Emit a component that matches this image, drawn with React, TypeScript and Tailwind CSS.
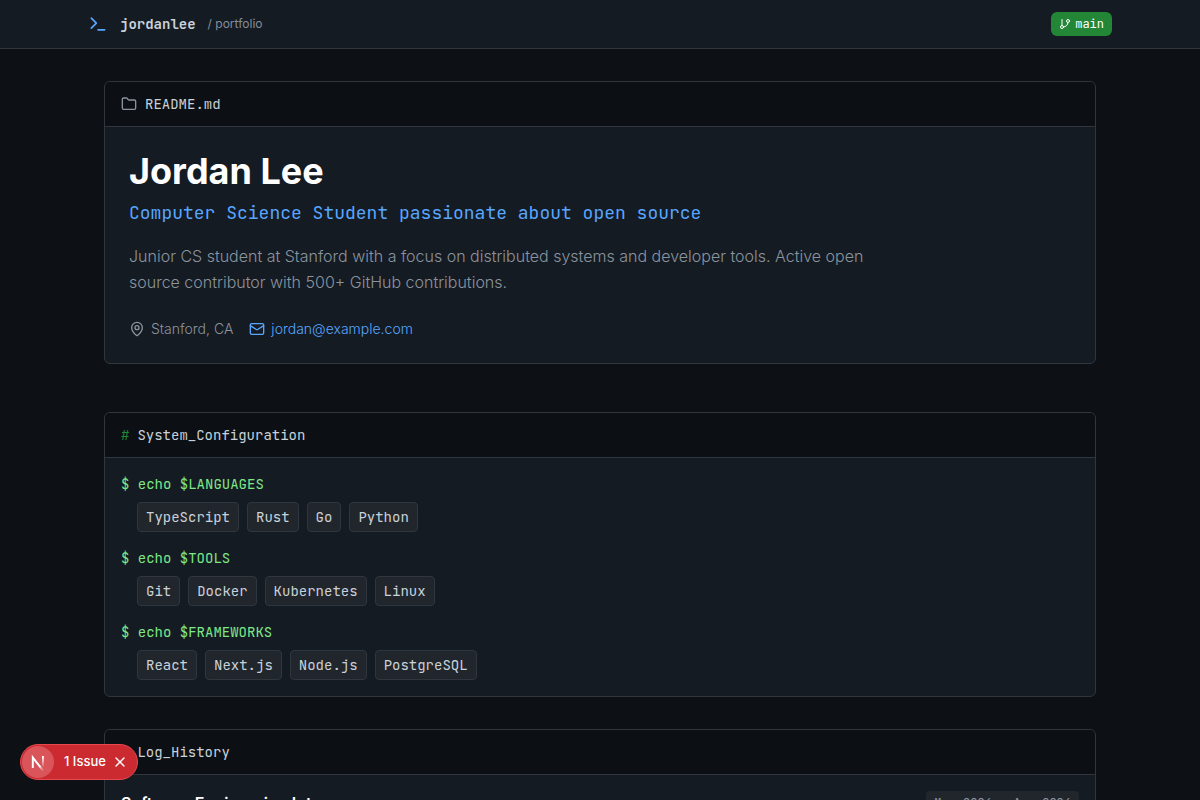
import { useState } from "react";
import type { ReactNode } from "react";
import { Folder, GitBranch, Mail, MapPin, Terminal, X } from "lucide-react";

const MONO = "font-['JetBrains_Mono','DejaVu_Sans_Mono',monospace]";

const configuration = [
  { name: "LANGUAGES", items: ["TypeScript", "Rust", "Go", "Python"] },
  { name: "TOOLS", items: ["Git", "Docker", "Kubernetes", "Linux"] },
  { name: "FRAMEWORKS", items: ["React", "Next.js", "Node.js", "PostgreSQL"] },
];

const history = [
  { title: "Software Engineering Intern", period: "May 2024 - Aug 2024" },
];

function Panel({ heading, className = "", children }: { heading: ReactNode; className?: string; children: ReactNode }) {
  return (
    <section className={`rounded-md border border-[#30363d] bg-[#151b23] overflow-hidden ${className}`}>
      <div className={`flex items-center gap-2 border-b border-[#30363d] bg-[#0c1014] px-4 py-3 text-sm ${MONO}`}>
        {heading}
      </div>
      {children}
    </section>
  );
}

function IssueToast() {
  const [open, setOpen] = useState(true);
  if (!open) return null;

  return (
    <div className="fixed bottom-5 left-5 flex h-9 items-center rounded-full border border-[#e5484d] bg-[#ca2a30] pl-px pr-[9px] text-[13px] font-medium text-white">
      <span className="flex size-8 items-center justify-center rounded-full bg-[#d9555a]">
        <svg viewBox="0 0 40 40" fill="none" className="size-8" aria-hidden="true">
          <defs>
            <linearGradient id="diagonal" x1="21" y1="22" x2="28" y2="31" gradientUnits="userSpaceOnUse">
              <stop stopColor="white" />
              <stop offset="1" stopColor="white" stopOpacity="0" />
            </linearGradient>
            <linearGradient id="stem" x1="26" y1="13" x2="26" y2="27" gradientUnits="userSpaceOnUse">
              <stop stopColor="white" />
              <stop offset="1" stopColor="white" stopOpacity="0" />
            </linearGradient>
          </defs>
          <path d="M13.5 27.5V14.5L23 26.5" stroke="white" strokeWidth="2.4" />
          <path d="M22.2 25.5L26.5 31" stroke="url(#diagonal)" strokeWidth="2.4" />
          <path d="M26.2 12.6V27.5" stroke="url(#stem)" strokeWidth="2.4" />
        </svg>
      </span>
      <span className="ml-2.5">1 Issue</span>
      <button type="button" aria-label="Dismiss" onClick={() => setOpen(false)} className="ml-1.5">
        <X className="size-4" />
      </button>
    </div>
  );
}

export default function App() {
  return (
    <div className="min-h-screen bg-[#0d1116] text-[#c9d1d9] antialiased font-['Inter',sans-serif]">
      <header className="border-b border-[#30363d] bg-[#151b23] px-4 py-3">
        <div className="mx-auto flex max-w-5xl items-center justify-between">
          <div className="flex items-center gap-3">
            <Terminal className="size-5 text-[#58a6ff]" />
            <span className={`text-sm font-semibold ${MONO}`}>jordanlee</span>
            <span className="text-xs text-[#848d97]">/ portfolio</span>
          </div>
          <button
            type="button"
            className={`flex h-6 items-center gap-1 rounded-md bg-[#238636] px-2 text-xs text-white ${MONO}`}
          >
            <GitBranch className="size-3" />
            main
          </button>
        </div>
      </header>

      <main className="mx-auto max-w-5xl px-4 py-8">
        <Panel
          className="mb-12"
          heading={
            <>
              <Folder className="size-4 text-[#8b949e]" />
              <span>README.md</span>
            </>
          }
        >
          <div className="p-6">
            <h1 className="mb-2 text-4xl font-bold text-white">Jordan Lee</h1>
            <p className={`mb-4 text-lg text-[#58a6ff] ${MONO}`}>
              Computer Science Student passionate about open source
            </p>
            <p className="mb-6 max-w-3xl font-light leading-[26px] text-[#8b949e]">
              Junior CS student at Stanford with a focus on distributed systems and developer tools. Active open
              source contributor with 500+ GitHub contributions.
            </p>
            <div className="flex flex-wrap gap-4 text-sm font-light">
              <span className="flex items-center gap-1.5 text-[#8b949e]">
                <MapPin className="size-4" />
                Stanford, CA
              </span>
              <a href="mailto:jordan@example.com" className="flex items-center gap-1.5 text-[#58a6ff] hover:underline">
                <Mail className="size-4" />
                jordan@example.com
              </a>
            </div>
          </div>
        </Panel>

        <Panel
          className="mb-8"
          heading={
            <>
              <span className="text-[#238636]">#</span>
              <h2>System_Configuration</h2>
            </>
          }
        >
          <div className={`space-y-4 p-4 text-sm ${MONO}`}>
            {configuration.map((group) => (
              <div key={group.name}>
                <div className="mb-2 text-[#7ee787]">$ echo ${group.name}</div>
                <ul className="flex flex-wrap gap-2 pl-4">
                  {group.items.map((item) => (
                    <li key={item} className="rounded border border-[#30363d] bg-[#21262d] px-2 py-1">
                      {item}
                    </li>
                  ))}
                </ul>
              </div>
            ))}
          </div>
        </Panel>

        <Panel
          heading={
            <>
              <span className="text-[#238636]">#</span>
              <h2>Log_History</h2>
            </>
          }
        >
          <div className="p-4">
            {history.map((entry) => (
              <div key={entry.title} className="flex items-start justify-between">
                <h3 className="font-semibold text-white">{entry.title}</h3>
                <span className={`rounded bg-[#21262d] px-2 py-1 text-xs text-[#8b949e] ${MONO}`}>{entry.period}</span>
              </div>
            ))}
          </div>
        </Panel>
      </main>

      <IssueToast />
    </div>
  );
}
